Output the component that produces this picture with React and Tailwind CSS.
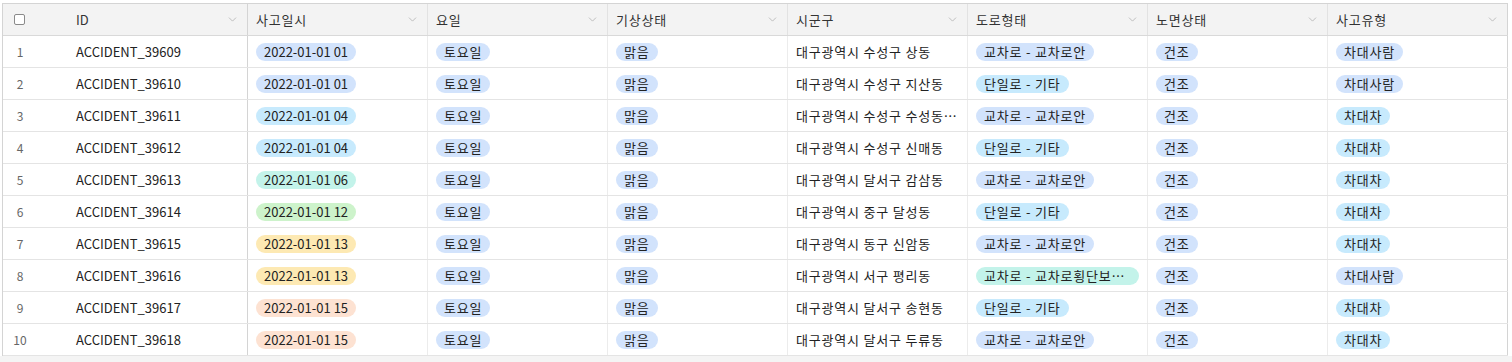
import { ChevronDown } from 'lucide-react';

const pill = {
  blue: 'bg-[#d2e3fc]',
  sky: 'bg-[#c7eafd]',
  teal: 'bg-[#c3f3ea]',
  green: 'bg-[#cdf3cb]',
  yellow: 'bg-[#fde9b3]',
  peach: 'bg-[#fde2d2]',
};

const rows = [
  { id: 39609, t: '01', c: 'blue', area: '대구광역시 수성구 상동', road: '교차로 - 교차로안', type: '차대사람' },
  { id: 39610, t: '01', c: 'blue', area: '대구광역시 수성구 지산동', road: '단일로 - 기타', type: '차대사람' },
  { id: 39611, t: '04', c: 'sky', area: '대구광역시 수성구 수성동1가', road: '교차로 - 교차로안', type: '차대차' },
  { id: 39612, t: '04', c: 'sky', area: '대구광역시 수성구 신매동', road: '단일로 - 기타', type: '차대차' },
  { id: 39613, t: '06', c: 'teal', area: '대구광역시 달서구 감삼동', road: '교차로 - 교차로안', type: '차대차' },
  { id: 39614, t: '12', c: 'green', area: '대구광역시 중구 달성동', road: '단일로 - 기타', type: '차대차' },
  { id: 39615, t: '13', c: 'yellow', area: '대구광역시 동구 신암동', road: '교차로 - 교차로안', type: '차대차' },
  { id: 39616, t: '13', c: 'yellow', area: '대구광역시 서구 평리동', road: '교차로 - 교차로횡단보도내', type: '차대사람' },
  { id: 39617, t: '15', c: 'peach', area: '대구광역시 달서구 송현동', road: '단일로 - 기타', type: '차대차' },
  { id: 39618, t: '15', c: 'peach', area: '대구광역시 달서구 두류동', road: '교차로 - 교차로안', type: '차대차' },
];

const roadColor = (r) =>
  r.startsWith('단일로') ? 'sky' : r.includes('횡단') ? 'teal' : 'blue';

const headers = ['사고일시', '요일', '기상상태', '시군구', '도로형태', '노면상태', '사고유형'];

const Pill = ({ color, children, ko }) => (
  <span
    className={`inline-block max-w-full truncate rounded-full px-2 leading-[18px] ${pill[color]} ${
      ko ? 'tracking-[0.8px]' : ''
    }`}
  >
    {children}
  </span>
);

const HeadCell = ({ label, dark, last }) => (
  <div
    className={`flex w-[180px] shrink-0 items-center justify-between pl-2 pr-[8px] border-r ${
      dark || last ? 'border-[#d4d4d4]' : 'border-[#e2e2e2]'
    }`}
  >
    <span className={label === 'ID' ? '' : 'tracking-[0.8px]'}>{label}</span>
    <ChevronDown size={13} strokeWidth={1.2} className="text-[#a0a0a0]" />
  </div>
);

const Cell = ({ children, dark, last }) => (
  <div
    className={`flex w-[180px] shrink-0 items-center overflow-hidden px-2 border-r ${
      dark || last ? 'border-[#d4d4d4]' : 'border-[#ececec]'
    }`}
  >
    {children}
  </div>
);

export default function App() {
  return (
    <div
      className="h-[362px] w-[1512px] overflow-hidden bg-white text-[13px] text-[#222]"
      style={{ fontFamily: '"Noto Sans CJK KR", "Noto Sans", sans-serif' }}
    >
      <div className="ml-[2px] mt-[3px] w-[1506px] border-l border-t border-[#d4d4d4]">
        <div className="flex h-8 border-b border-[#d9d9d9] bg-[#f3f3f3] text-[#333]">
          <div className="flex w-[65px] shrink-0 items-center pl-[11px]">
            <span className="h-[11px] w-[11px] rounded-[2px] border border-[#8a8a8a] bg-white" />
          </div>
          <HeadCell label="ID" dark />
          {headers.map((h, i) => (
            <HeadCell key={h} label={h} last={i === headers.length - 1} />
          ))}
        </div>
        {rows.map((r, i) => (
          <div key={r.id} className="flex h-8 border-b border-[#e4e4e4]">
            <div className="flex w-[65px] shrink-0 items-center">
              <span className="w-[34px] text-center text-[12px] text-[#666]">{i + 1}</span>
            </div>
            <Cell dark>ACCIDENT_{r.id}</Cell>
            <Cell>
              <Pill color={r.c}>2022-01-01 {r.t}</Pill>
            </Cell>
            <Cell>
              <Pill color="blue" ko>토요일</Pill>
            </Cell>
            <Cell>
              <Pill color="blue" ko>맑음</Pill>
            </Cell>
            <Cell>
              <span className="truncate tracking-[0.8px]">{r.area}</span>
            </Cell>
            <Cell>
              <Pill color={roadColor(r.road)} ko>{r.road}</Pill>
            </Cell>
            <Cell>
              <Pill color="blue" ko>건조</Pill>
            </Cell>
            <Cell last>
              <Pill color={r.type === '차대차' ? 'sky' : 'blue'} ko>{r.type}</Pill>
            </Cell>
          </div>
        ))}
      </div>
      <div className="h-[7px] bg-[#f4f4f4]" />
    </div>
  );
}
